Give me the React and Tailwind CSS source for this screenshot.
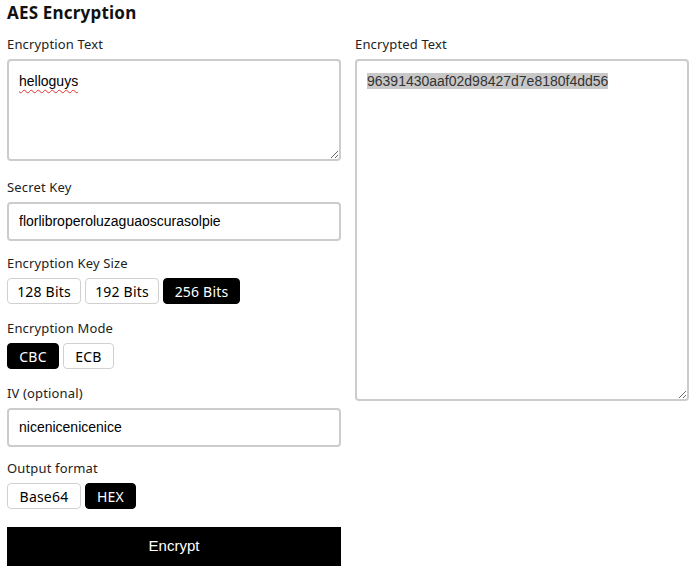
import React from "react";

const lab = "block h-[16px] leading-[16px] text-[13px] tracking-[0.15px] text-[#222] mb-[7px]";
const mont = { fontFamily: '"Noto Sans", "Open Sans", sans-serif' };
const arial = { fontFamily: '"Liberation Sans", Arial, sans-serif' };

function Seg({ items, active }) {
  return (
    <div className="flex gap-[4px]">
      {items.map(([t, w]) => (
        <div
          key={t}
          className={
            (t === active
              ? "border-black bg-black text-white "
              : "border-[#d0d0d0] bg-white text-black ") +
            w +
            " h-[26px] flex items-center justify-center rounded-[4px] border text-[14px] tracking-[0.2px]"
          }
        >
          {t}
        </div>
      ))}
    </div>
  );
}

export default function App() {
  return (
    <div className="w-[698px] h-[577px] bg-white pl-[7px] pr-[9px]" style={mont}>
      <div className="h-[36px] pt-[2px] text-[17px] font-bold tracking-[0.2px] leading-[22px] text-[#111]">AES Encryption</div>
      <div className="grid grid-cols-2 gap-[14px]">
        <div className="flex flex-col">
          <div className={lab}>Encryption Text</div>
          <div
            className="h-[102px] resize overflow-auto rounded-[4px] border-2 border-[#cccccc] px-[10px] pt-[10px] text-[14px] text-black"
            style={arial}
          >
            <span className="underline decoration-wavy decoration-[#e03030] decoration-1 underline-offset-[3px]">helloguys</span>
          </div>

          <div className={lab + " mt-[18px]"}>Secret Key</div>
          <div
            className="h-[39px] flex items-center rounded-[4px] border-2 border-[#cccccc] px-[10px] text-[14px] text-black"
            style={arial}
          >
            florlibroperoluzaguaoscurasolpie
          </div>

          <div className={lab + " mt-[14px]"}>Encryption Key Size</div>
          <Seg
            items={[
              ["128 Bits", "w-[74px]"],
              ["192 Bits", "w-[74px]"],
              ["256 Bits", "w-[77px]"],
            ]}
            active="256 Bits"
          />

          <div className={lab + " mt-[16px]"}>Encryption Mode</div>
          <Seg
            items={[
              ["CBC", "w-[52px]"],
              ["ECB", "w-[51px]"],
            ]}
            active="CBC"
          />

          <div className={lab + " mt-[16px]"}>IV (optional)</div>
          <div
            className="h-[39px] flex items-center rounded-[4px] border-2 border-[#cccccc] px-[10px] text-[14px] text-black"
            style={arial}
          >
            nicenicenicenice
          </div>

          <div className={lab + " mt-[13px]"}>Output format</div>
          <Seg
            items={[
              ["Base64", "w-[74px]"],
              ["HEX", "w-[51px]"],
            ]}
            active="HEX"
          />

          <div
            className="mt-[18px] h-[39px] flex items-center justify-center bg-black text-white text-[15px]"
            style={arial}
          >
            Encrypt
          </div>
        </div>

        <div className="flex flex-col">
          <div className={lab}>Encrypted Text</div>
          <div
            className="h-[342px] resize overflow-auto rounded-[4px] border-2 border-[#cccccc] px-[10px] pt-[10px] text-[14px] text-[#333]"
            style={arial}
          >
            <span className="bg-[#c8c8c8]">96391430aaf02d98427d7e8180f4dd56</span>
          </div>
        </div>
      </div>
    </div>
  );
}
